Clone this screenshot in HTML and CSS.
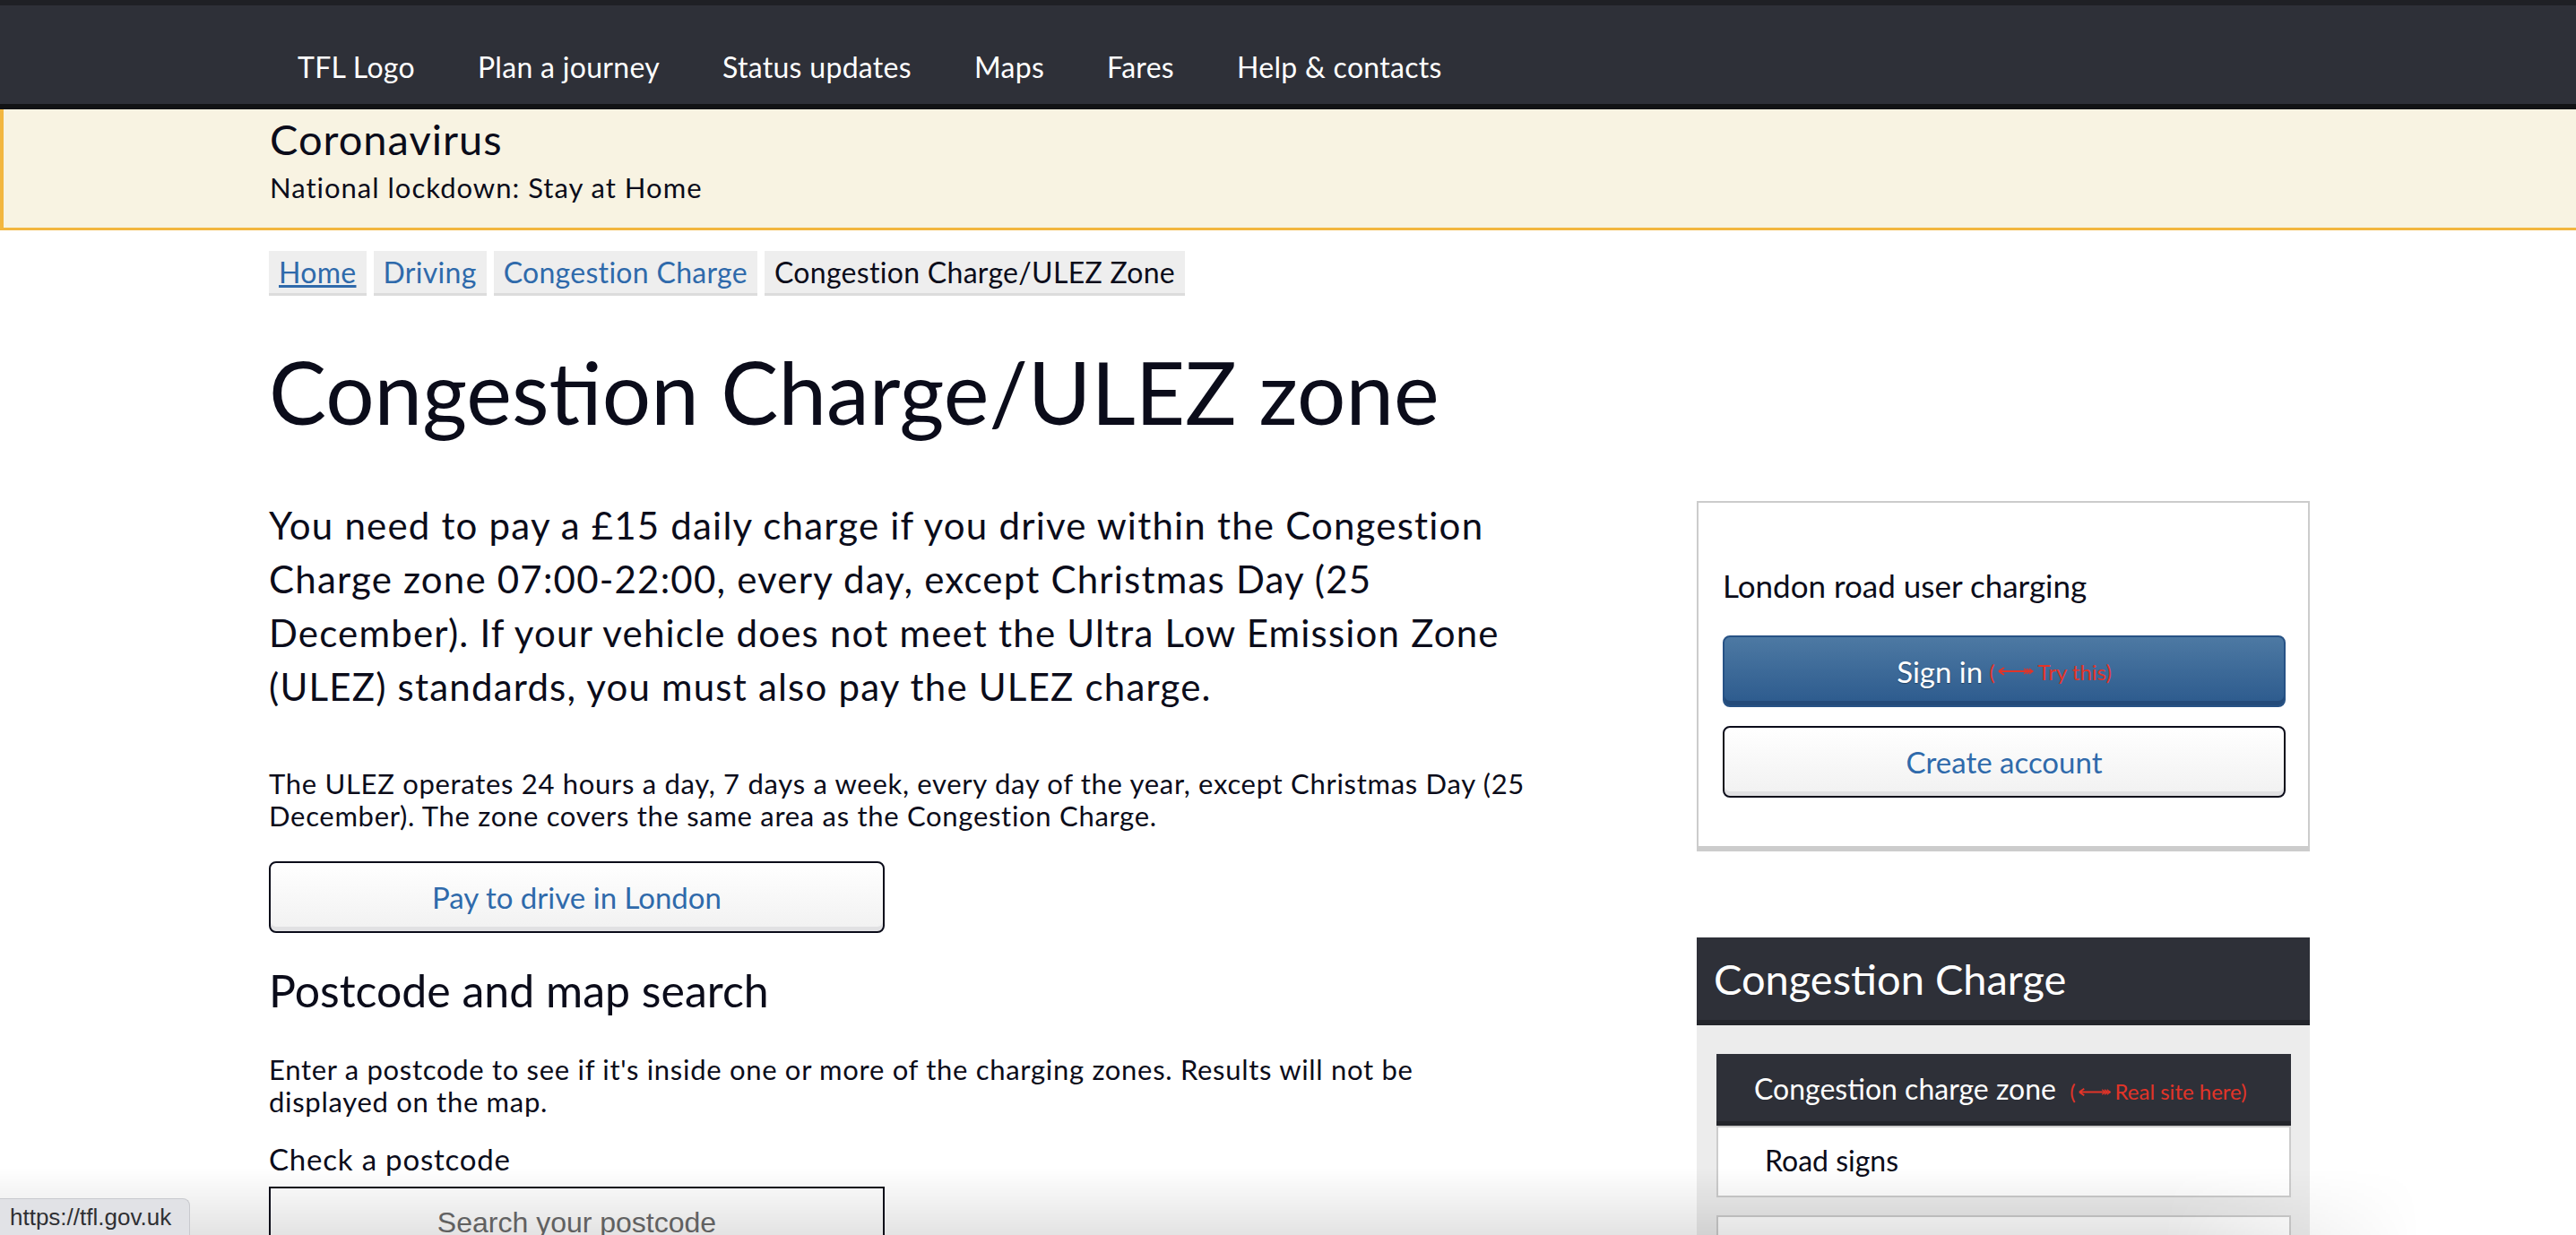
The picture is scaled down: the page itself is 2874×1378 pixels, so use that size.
FILE: index.html
```html
<!DOCTYPE html>
<html lang="en">
<head>
<meta charset="utf-8">
<title>Congestion Charge/ULEZ zone - Transport for London</title>
<link rel="stylesheet" href="styles.css">
</head>
<body>
<header class="topbar">
  <nav class="container topnav">
    <a class="topnav-item" href="#">TFL Logo</a>
    <a class="topnav-item" href="#">Plan a journey</a>
    <a class="topnav-item" href="#">Status updates</a>
    <a class="topnav-item" href="#">Maps</a>
    <a class="topnav-item" href="#">Fares</a>
    <a class="topnav-item" href="#">Help &amp; contacts</a>
  </nav>
</header>

<section class="alert">
  <div class="container">
    <h2 class="alert-title">Coronavirus</h2>
    <p class="alert-text">National lockdown: Stay at Home</p>
  </div>
</section>

<main class="container">
  <ol class="breadcrumb">
    <li class="crumb"><a class="crumb-link crumb-home" href="#">Home</a></li>
    <li class="crumb"><a class="crumb-link" href="#">Driving</a></li>
    <li class="crumb"><a class="crumb-link" href="#">Congestion Charge</a></li>
    <li class="crumb crumb-current">Congestion Charge/ULEZ Zone</li>
  </ol>

  <h1 class="page-title">Congestion Charge/ULEZ zone</h1>

  <div class="layout">
    <div class="main-col">
      <p class="lead">You need to pay a £15 daily charge if you drive within the Congestion Charge zone 07:00-22:00, every day, except Christmas Day (25 December). If your vehicle does not meet the Ultra Low Emission Zone (ULEZ) standards, you must also pay the ULEZ charge.</p>
      <p class="body-text">The ULEZ operates 24 hours a day, 7 days a week, every day of the year, except Christmas Day (25 December). The zone covers the same area as the Congestion Charge.</p>
      <a class="btn btn-secondary btn-pay" href="#">Pay to drive in London</a>

      <h2 class="section-title">Postcode and map search</h2>
      <p class="body-text">Enter a postcode to see if it's inside one or more of the charging zones. Results will not be displayed on the map.</p>
      <label class="field-label" for="postcode">Check a postcode</label>
      <input class="postcode-input" id="postcode" type="text" placeholder="Search your postcode">
    </div>

    <aside class="side-col">
      <div class="account-box">
        <h3 class="account-title">London road user charging</h3>
        <a class="btn btn-primary" href="#">Sign in <span class="note">(<svg class="note-arrow" viewBox="0 0 44 12" width="44" height="12" aria-hidden="true"><path d="M2 6 H40 M2 6 L8 2 M2 6 L8 10" fill="none" stroke="currentColor" stroke-width="2"/><path d="M30 3 L34 6 L30 9 M33 3 L37 6 L33 9 M36 3 L40 6 L36 9" fill="none" stroke="currentColor" stroke-width="1.3"/></svg>Try this)</span></a>
        <a class="btn btn-secondary" href="#">Create account</a>
      </div>

      <div class="side-nav">
        <h3 class="side-nav-title">Congestion Charge</h3>
        <ul class="side-nav-list">
          <li class="side-nav-item side-nav-item-active">Congestion charge zone <span class="note">(<svg class="note-arrow" viewBox="0 0 44 12" width="40" height="11" aria-hidden="true"><path d="M2 6 H40 M2 6 L8 2 M2 6 L8 10" fill="none" stroke="currentColor" stroke-width="2"/><path d="M30 3 L34 6 L30 9 M33 3 L37 6 L33 9 M36 3 L40 6 L36 9" fill="none" stroke="currentColor" stroke-width="1.3"/></svg>Real site here)</span></li>
          <li class="side-nav-item">Road signs</li>
          <li class="side-nav-item">&nbsp;</li>
        </ul>
      </div>
    </aside>
  </div>
</main>

<div class="bottom-fade" aria-hidden="true"></div>
<div class="status-bubble">https://tfl.gov.uk</div>
</body>
</html>
```

FILE: styles.css
```css
* { box-sizing: border-box; }

html, body {
  margin: 0;
  padding: 0;
  background: #ffffff;
}

body {
  font-family: Lato, "Open Sans", "Noto Sans", sans-serif;
  color: #0b0c1a;
}

.container {
  width: 2280px;
  margin: 0 auto;
}

/* top navigation */
.topbar {
  background: #2e3038;
  border-top: 6px solid #1f2025;
  border-bottom: 6px solid #121315;
  height: 122px;
}

.topnav {
  display: flex;
  align-items: center;
  height: 110px;
  padding-top: 26px;
}

.topnav-item {
  color: #ffffff;
  text-decoration: none;
  font-size: 32px;
  letter-spacing: 0.3px;
  padding: 0 35px;
}

/* alert */
.alert {
  background: #f8f3e2;
  border-left: 4px solid #f2b63f;
  border-bottom: 3px solid #f2b63f;
  height: 135px;
  padding-top: 3px;
}

.alert .container {
  padding-left: 2px;
}

.alert-title {
  margin: 0;
  font-size: 47px;
  letter-spacing: 1px;
  font-weight: 400;
  line-height: 60px;
}

.alert-text {
  margin: 4px 0 0;
  font-size: 31px;
  letter-spacing: 1px;
  line-height: 40px;
}

/* breadcrumb */
.breadcrumb {
  list-style: none;
  margin: 23px 0 0;
  padding: 0 0 0 3px;
  display: flex;
  gap: 8px;
}

.crumb {
  background: #eeeeee;
  border-bottom: 3px solid #dcdcdc;
  height: 50px;
  padding: 0 11px;
  font-size: 32px;
  letter-spacing: 0.3px;
  line-height: 47px;
}

.crumb-link {
  color: #2f6aab;
  text-decoration: none;
}

.crumb-home {
  text-decoration: underline;
}

.crumb-current {
  color: #0b0c1a;
}

/* title */
.page-title {
  margin: 47px 0 0;
  padding-left: 3px;
  font-size: 96px;
  font-weight: 400;
  line-height: 120px;
  color: #0b0c1a;
}

/* layout */
.layout {
  display: grid;
  grid-template-columns: 1460px 684px;
  justify-content: space-between;
  margin-top: 62px;
}

.main-col {
  padding-left: 3px;
}

.lead {
  margin: -3px 0 0;
  max-width: 1425px;
  font-size: 42px;
  letter-spacing: 1.2px;
  line-height: 60px;
}

.body-text {
  margin: 0;
  max-width: 1410px;
  font-size: 31px;
  letter-spacing: 0.7px;
  line-height: 36px;
}

.lead + .body-text {
  margin-top: 60px;
}

/* buttons */
.btn {
  display: flex;
  align-items: center;
  justify-content: center;
  height: 80px;
  border-radius: 8px;
  text-decoration: none;
  font-size: 33px;
}

.btn-secondary {
  color: #2f6aab;
  background: linear-gradient(#ffffff, #f1f1f1);
  border: 2px solid #0b0c1a;
  box-shadow: inset 0 -5px 0 #e1e1e3;
}

.btn-primary {
  color: #ffffff;
  background: linear-gradient(#4d79a3, #2c5a8d);
  border: 2px solid #275285;
  box-shadow: inset 0 -5px 0 #244b7a;
  text-shadow: 0 1px 1px rgba(0, 0, 0, 0.35);
}

.btn-pay {
  width: 687px;
  margin-top: 33px;
}

.note {
  color: #e23428;
  font-size: 24px;
  margin-left: 7px;
  text-shadow: none;
  display: inline-flex;
  align-items: center;
}

.note-arrow {
  margin: 0 2px;
  color: #e23428;
}

.section-title {
  margin: 34px 0 0;
  font-size: 50px;
  font-weight: 400;
  line-height: 60px;
}

.section-title + .body-text {
  margin-top: 40px;
}

.field-label {
  display: block;
  margin-top: 26px;
  font-size: 33px;
  letter-spacing: 0.8px;
  line-height: 40px;
}

.postcode-input {
  display: block;
  width: 687px;
  height: 80px;
  margin-top: 11px;
  border: 2px solid #0b0c1a;
  font-family: "Liberation Sans", Arial, sans-serif;
  font-size: 32px;
  text-align: center;
  background: #ffffff;
}

.postcode-input::placeholder {
  color: #6b6b6b;
}

/* sidebar */
.account-box {
  border: 2px solid #cccccc;
  border-bottom: 6px solid #cccccc;
  padding: 70px 25px 54px 27px;
}

.account-title {
  margin: 0 0 34px;
  font-size: 35px;
  font-weight: 400;
  line-height: 44px;
}

.account-box .btn + .btn {
  margin-top: 21px;
}

.side-nav {
  margin-top: 96px;
  background: #ececec;
}

.side-nav-title {
  margin: 0;
  background: #2e3038;
  border-bottom: 6px solid #23252b;
  color: #ffffff;
  font-size: 47px;
  font-weight: 400;
  height: 98px;
  line-height: 92px;
  padding-left: 19px;
}

.side-nav-list {
  list-style: none;
  margin: 0;
  padding: 32px 21px 10px 22px;
}

.side-nav-item {
  background: #ffffff;
  border: 2px solid #cccccc;
  height: 80px;
  padding-left: 52px;
  font-size: 32px;
  line-height: 74px;
  color: #0b0c1a;
}

.side-nav-item + .side-nav-item {
  margin-top: 20px;
}

.side-nav-item-active {
  background: #2e3038;
  border: none;
  border-bottom: 5px solid #23252b;
  color: #ffffff;
  padding-left: 42px;
  line-height: 78px;
}

.side-nav-item-active + .side-nav-item {
  margin-top: 0;
}

/* overlays */
.bottom-fade {
  position: fixed;
  left: 0;
  right: 0;
  bottom: 0;
  height: 75px;
  background: linear-gradient(rgba(0, 0, 0, 0), rgba(0, 0, 0, 0.11));
  -webkit-mask-image: linear-gradient(to right, #000 0%, #000 84%, transparent 94%);
  mask-image: linear-gradient(to right, #000 0%, #000 84%, transparent 94%);
  pointer-events: none;
}

.status-bubble {
  position: fixed;
  left: 0;
  bottom: 0;
  width: 212px;
  height: 41px;
  background: #e1e2e6;
  border: 1px solid #c8c9ce;
  border-left: none;
  border-bottom: none;
  border-top-right-radius: 8px;
  font-family: "Liberation Sans", Arial, sans-serif;
  font-size: 26px;
  line-height: 40px;
  padding-left: 11px;
  color: #2f3033;
}
```
